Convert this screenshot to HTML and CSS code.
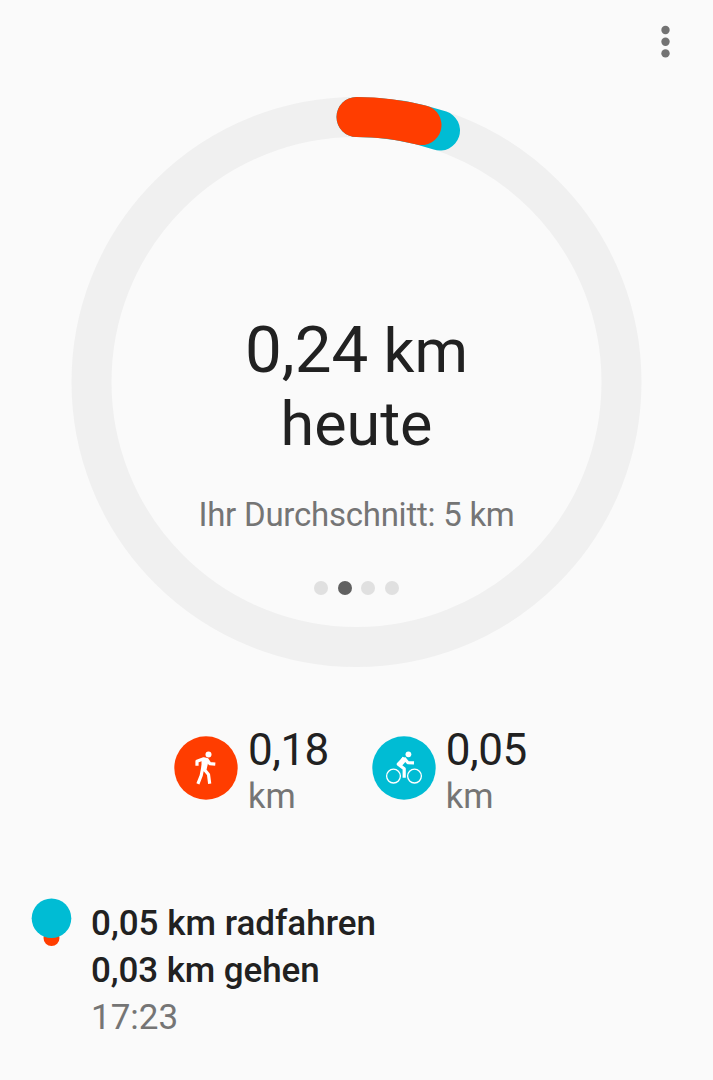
FILE: index.html
```html
<!DOCTYPE html>
<html lang="de">
<head>
<meta charset="utf-8">
<title>Fit</title>
<link rel="stylesheet" href="styles.css">
</head>
<body>
<main class="app">
  <header class="toolbar">
    <svg class="menu" viewBox="0 0 10 34"><circle cx="5.500" cy="5" r="4.200"/><circle cx="5.500" cy="16.700" r="4.200"/><circle cx="5.500" cy="28.400" r="4.200"/></svg>
  </header>
  <section class="goal">
    <svg class="ring" viewBox="0 0 570 570">
      <circle class="track" cx="285" cy="285" r="265"/>
      <path class="arc cycling" d="M285 20A265 265 0 0 1 368.500 33.500"/>
      <path class="arc walking" d="M285 20A265 265 0 0 1 350 28.100"/>
    </svg>
    <div class="summary">
      <h1 class="total"><span class="number">0,24</span> km<br>heute</h1>
      <p class="average">Ihr Durchschnitt: 5 km</p>
      <div class="pager"><i class="dot"></i><i class="dot active"></i><i class="dot"></i><i class="dot"></i></div>
    </div>
  </section>
  <section class="stats">
    <div class="stat">
      <svg class="badge walking" viewBox="0 0 64 64">
        <circle cx="32" cy="32" r="31.700"/>
        <circle class="head" cx="34.500" cy="18.400" r="3"/>
        <path class="limb" d="M23 29.800V25.300L29.700 22.800L33 23.500L35.800 27.700L41.300 28.200"/>
        <path class="body" d="M27.500 22.200L32.800 22L34.600 24.500L32.600 33.600L27.500 33.800Z"/>
        <path class="limb" d="M30.500 25L28.400 33.500L27.200 39.500L23.900 47.800M30 33L34.500 38.400L35.700 47.800"/>
      </svg>
      <div class="figures"><span class="value">0,18</span><span class="unit">km</span></div>
    </div>
    <div class="stat">
      <svg class="badge cycling" viewBox="0 0 64 64">
        <circle cx="32" cy="32" r="31.700"/>
        <circle class="wheel" cx="21.500" cy="40.100" r="6.900"/>
        <circle class="wheel" cx="42.500" cy="40.100" r="6.900"/>
        <circle class="head" cx="36.400" cy="18.300" r="2.900"/>
        <path class="limb" d="M32 22L26.300 28.200L32.200 32.800V41.800M32 22L35.800 26.600L42 26.900"/>
        <path class="body" d="M30.500 20.700L34.200 22.200L34 25.200L29.800 30L26 28.700Z"/>
      </svg>
      <div class="figures"><span class="value">0,05</span><span class="unit">km</span></div>
    </div>
  </section>
  <section class="entry">
    <svg class="marker" viewBox="0 0 40 48"><circle class="small" cx="20" cy="40" r="8"/><circle class="large" cx="20" cy="20.300" r="19.800"/></svg>
    <div class="details"><p>0,05 km radfahren</p><p class="tight">0,03 km gehen</p><time>17:23</time></div>
  </section>
</main>
</body>
</html>
```
FILE: styles.css
```css
* { box-sizing: border-box; margin: 0; padding: 0; }
body { background: #fafafa; color: #212121; font-family: Roboto, sans-serif; }
svg { display: block; }
.app { width: 713px; height: 1080px; overflow: hidden; }
.toolbar { height: 97px; padding: 25px 43px 0 0; display: flex; justify-content: flex-end; align-items: flex-start; }
.menu { width: 10px; height: 34px; fill: #737373; }
.goal { display: grid; justify-content: center; height: 570px; }
.ring { grid-area: 1 / 1; width: 571px; height: 570px; }
.ring .track { fill: none; stroke: #f0f0f0; stroke-width: 40; }
.arc { fill: none; stroke-width: 40; stroke-linecap: round; }
.arc.walking { stroke: #ff3d00; }
.arc.cycling { stroke: #00bcd4; }
.summary { grid-area: 1 / 1; padding-top: 217px; display: flex; flex-direction: column; align-items: center; text-align: center; }
.total { font-size: 61px; line-height: 73px; height: 148px; font-weight: 400; }
.total .number { font-size: 65.500px; line-height: 72px; }
.average { margin-top: 33px; font-size: 33px; line-height: 40px; letter-spacing: -0.25px; color: #757575; }
.pager { display: flex; gap: 9.700px; margin-top: 46px; }
.dot { width: 14px; height: 14px; border-radius: 50%; background: #e0e0e0; }
.dot.active { background: #616161; }
.stats { display: flex; gap: 43px; padding: 58px 0 0 174px; height: 199px; }
.stat { display: flex; gap: 10px; }
.badge { width: 64px; height: 64px; margin-top: 11px; }
.badge.walking { fill: #ff3d00; }
.badge.cycling { fill: #00bcd4; }
.badge .head, .badge .body { fill: #fff; }
.limb { fill: none; stroke: #fff; stroke-width: 3.200; stroke-linejoin: round; }
.wheel { fill: none; stroke: #fff; stroke-width: 1.300; }
.figures { display: flex; flex-direction: column; }
.value { font-size: 44px; line-height: 50px; letter-spacing: -0.5px; }
.unit { font-size: 34.500px; line-height: 43px; color: #757575; }
.entry { display: flex; gap: 19px; padding: 32px 0 0 31px; }
.marker { width: 41px; height: 48px; }
.marker .small { fill: #ff3d00; }
.marker .large { fill: #00bcd4; }
.details { padding-top: 2px; font-size: 35px; line-height: 47px; font-weight: 500; }
.details .tight { letter-spacing: -0.1px; }
.details time { display: block; font-weight: 400; color: #757575; }
```
